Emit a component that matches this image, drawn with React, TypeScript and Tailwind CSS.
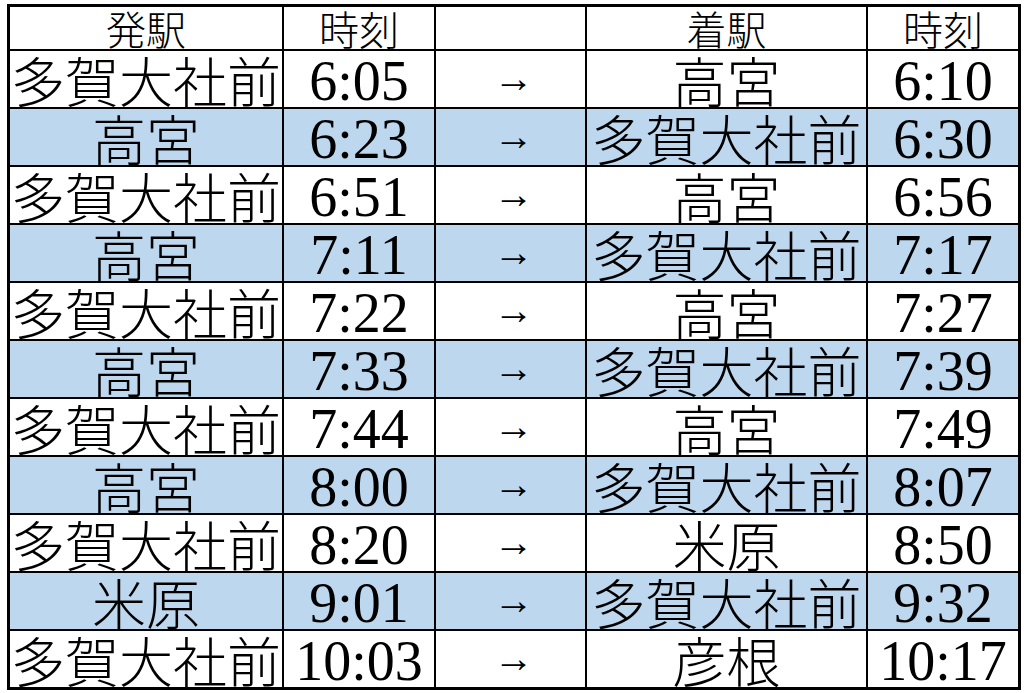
import React from "react";

const rows: [string, string, string, string][] = [
  ["多賀大社前", "6:05", "高宮", "6:10"],
  ["高宮", "6:23", "多賀大社前", "6:30"],
  ["多賀大社前", "6:51", "高宮", "6:56"],
  ["高宮", "7:11", "多賀大社前", "7:17"],
  ["多賀大社前", "7:22", "高宮", "7:27"],
  ["高宮", "7:33", "多賀大社前", "7:39"],
  ["多賀大社前", "7:44", "高宮", "7:49"],
  ["高宮", "8:00", "多賀大社前", "8:07"],
  ["多賀大社前", "8:20", "米原", "8:50"],
  ["米原", "9:01", "多賀大社前", "9:32"],
  ["多賀大社前", "10:03", "彦根", "10:17"],
];

const jp = "font-['Noto_Sans_CJK_JP',sans-serif] font-light";
const num = "font-['Liberation_Serif','Times_New_Roman','DejaVu_Serif',serif] font-normal";

export default function App() {
  return (
    <div className="w-[1024px] h-[693px] bg-white overflow-hidden">
      <div className="ml-[7px] mt-[4px] w-[1014px] bg-black p-[3px] grid grid-cols-[272px_150px_149px_279px_150px] auto-rows-[56px] grid-rows-[42px] gap-[2px] text-black">
        <div className={`bg-white flex items-center justify-center text-[40px] leading-none ${jp}`}>発駅</div>
        <div className={`bg-white flex items-center justify-center text-[40px] leading-none ${jp}`}>時刻</div>
        <div className="bg-white"></div>
        <div className={`bg-white flex items-center justify-center text-[40px] leading-none ${jp}`}>着駅</div>
        <div className={`bg-white flex items-center justify-center text-[40px] leading-none ${jp}`}>時刻</div>
        {rows.map((r, i) => {
          const bg = i % 2 === 1 ? "bg-[#bdd7ee]" : "bg-white";
          return (
            <React.Fragment key={i}>
              <div className={`${bg} flex items-center justify-center text-[54px] leading-none whitespace-nowrap pt-[2px] ${jp}`}>{r[0]}</div>
              <div className={`${bg} flex items-center justify-center text-[56px] leading-none pt-[4px] ${num}`}>{r[1]}</div>
              <div className={`${bg} flex items-center justify-center text-[40px] leading-none pl-[6px] ${num}`}>→</div>
              <div className={`${bg} flex items-center justify-center text-[54px] leading-none whitespace-nowrap pt-[2px] ${jp}`}>{r[2]}</div>
              <div className={`${bg} flex items-center justify-center text-[56px] leading-none pt-[4px] ${num}`}>{r[3]}</div>
            </React.Fragment>
          );
        })}
      </div>
    </div>
  );
}
